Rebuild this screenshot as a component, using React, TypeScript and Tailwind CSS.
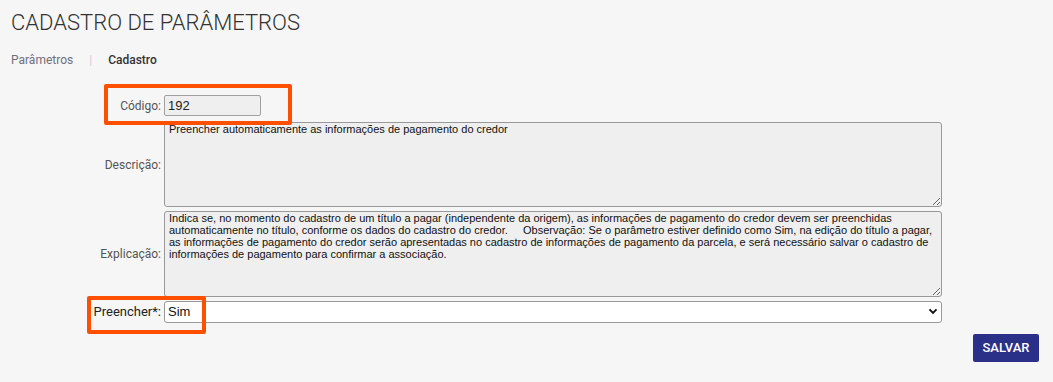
import React from "react";

const descricao = "Preencher automaticamente as informações de pagamento do credor";
const explicacao =
  "Indica se, no momento do cadastro de um título a pagar (independente da origem), as informações de pagamento do credor devem ser preenchidas automaticamente no título, conforme os dados do cadastro do credor.     Observação: Se o parâmetro estiver definido como Sim, na edição do título a pagar, as informações de pagamento do credor serão apresentadas no cadastro de informações de pagamento da parcela, e será necessário salvar o cadastro de informações de pagamento para confirmar a associação.";

const App = () => {
  return (
    <div className="min-h-screen w-full bg-[#f6f6f6] font-['Roboto',sans-serif] text-[#333]">
      <div className="relative px-[11px] pt-[9px]">
        <h1 className="text-[22px] font-light leading-[28px] text-[#333]">CADASTRO DE PARÂMETROS</h1>

        {/* breadcrumb */}
        <nav className="mt-[15px] flex items-center text-[12px] leading-[16px]">
          <span className="text-[#6f6f7d]">Parâmetros</span>
          <span className="mx-[16px] text-[#d0d0d0]">|</span>
          <span className="font-medium text-[#333]">Cadastro</span>
        </nav>

        {/* form */}
        <div className="mt-[27px] grid grid-cols-[150px_778px] items-center gap-x-[3px] text-[12px]">
          <label className="text-right text-[#555]">Código:</label>
          <input
            readOnly
            value="192"
            className="h-[21px] w-[97px] rounded-[2px] border border-[#a0a0a0] bg-[#efefef] px-[3px] font-['Liberation_Sans',sans-serif] text-[13px] text-[#222] outline-none"
          />

          <label className="mt-[6px] text-right text-[#555]">Descrição:</label>
          <textarea
            readOnly
            defaultValue={descricao}
            className="mt-[6px] h-[85px] w-[778px] rounded-[3px] border border-[#999] bg-[#efefef] px-[4px] py-0 font-['Liberation_Sans',sans-serif] text-[11px] leading-[12px] text-[#111] outline-none"
          />

          <label className="mt-[4px] text-right text-[#555]">Explicação:</label>
          <textarea
            readOnly
            defaultValue={explicacao}
            className="mt-[4px] h-[86px] w-[778px] rounded-[3px] border border-[#999] bg-[#efefef] px-[4px] py-0 font-['Liberation_Sans',sans-serif] text-[11px] leading-[12px] text-[#111] outline-none"
          />

          <label className="mt-[4px] text-right text-[13px] text-[#222]">Preencher*:</label>
          <div className="relative mt-[4px] h-[22px] w-[778px]">
            <select
              defaultValue="Sim"
              className="h-[22px] w-full appearance-none rounded-[3px] border border-[#999] bg-white px-[3px] font-['Liberation_Sans',sans-serif] text-[13px] text-[#111] outline-none"
            >
              <option>Sim</option>
              <option>Não</option>
            </select>
            <svg
              viewBox="0 0 10 8"
              className="pointer-events-none absolute right-[4px] top-[7px] h-[7px] w-[10px]"
            >
              <path d="M1 1.5 L5 5.5 L9 1.5" fill="none" stroke="#111" strokeWidth="2.2" />
            </svg>
          </div>
        </div>

        <div className="mt-[11px] flex justify-end pr-[3px]">
          <button className="h-[28px] w-[66px] rounded-[2px] bg-[#2a3088] text-[13px] font-medium text-white">
            SALVAR
          </button>
        </div>

        {/* annotation boxes */}
        <div className="pointer-events-none absolute left-[104px] top-[84px] h-[41px] w-[188px] rounded-[2px] border-[4px] border-[#fe5000]" />
        <div className="pointer-events-none absolute left-[87px] top-[296px] h-[38px] w-[119px] rounded-[2px] border-[4px] border-[#fe5000]" />
      </div>
    </div>
  );
};

export default App;
